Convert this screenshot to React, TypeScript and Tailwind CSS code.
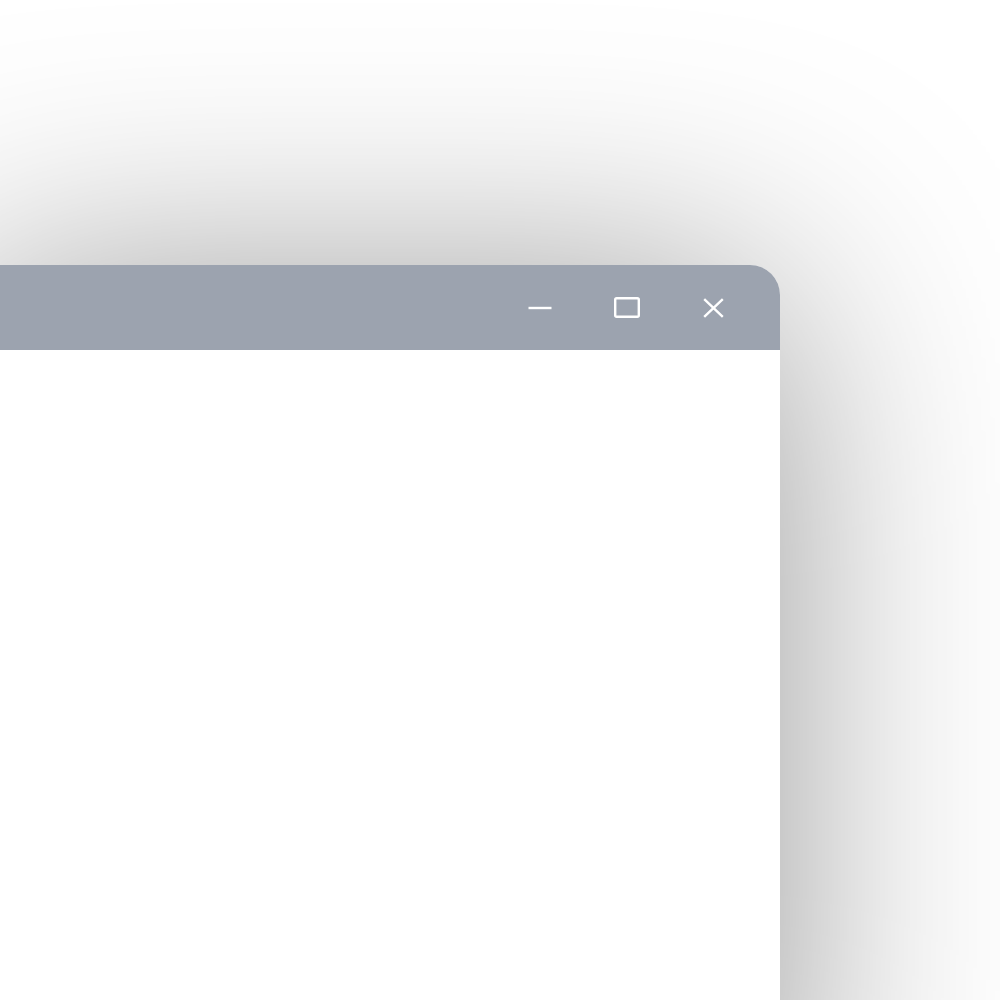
import React from "react";

function Minimize() {
  return (
    <svg width="24" height="6" viewBox="0 0 24 6" className="block">
      <line x1="0.5" y1="3" x2="23.5" y2="3" stroke="white" strokeWidth="2.4" />
    </svg>
  );
}

function Maximize() {
  return (
    <svg width="26" height="21" viewBox="0 0 26 21" className="block">
      <rect x="1.2" y="1.2" width="23.6" height="18.6" rx="1.5" fill="none" stroke="white" strokeWidth="2.4" />
    </svg>
  );
}

function Close() {
  return (
    <svg width="21" height="20" viewBox="0 0 21 20" className="block">
      <path d="M1.2 1.2 L19.8 18.8 M19.8 1.2 L1.2 18.8" stroke="white" strokeWidth="2.4" fill="none" />
    </svg>
  );
}

export default function App() {
  return (
    <div className="w-[1000px] h-[1000px] overflow-hidden bg-white pt-[265px]" style={{ fontFamily: '"Liberation Sans", sans-serif' }}>
      <div className="ml-[-40px] w-[820px] h-[900px] bg-white rounded-tr-[30px] shadow-[0_20px_380px_rgba(0,0,0,0.42)] flex flex-col">
        <div className="h-[85px] bg-[#9ca3af] rounded-tr-[30px] flex items-center justify-end pr-[23px]">
          <div className="w-[87px] h-full flex items-center justify-center">
            <Minimize />
          </div>
          <div className="w-[87px] h-full flex items-center justify-center">
            <Maximize />
          </div>
          <div className="w-[87px] h-full flex items-center justify-center">
            <Close />
          </div>
        </div>
        <div className="flex-1 bg-white" />
      </div>
    </div>
  );
}
